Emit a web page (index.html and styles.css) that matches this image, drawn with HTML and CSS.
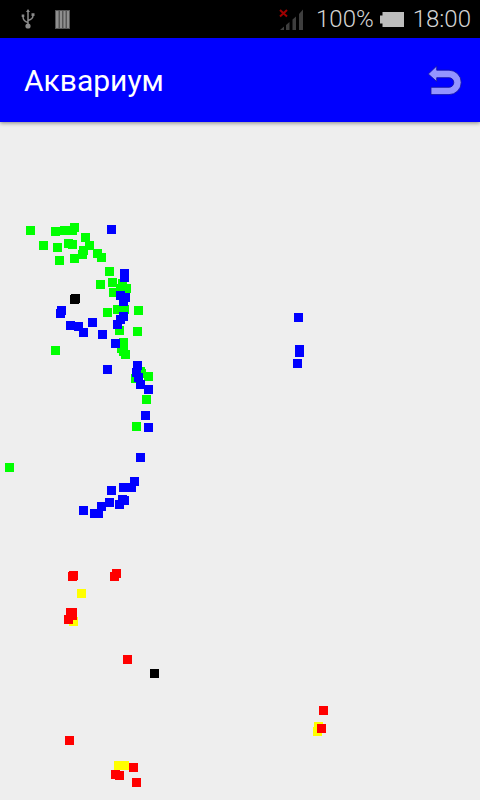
FILE: index.html
```html
<!DOCTYPE html>
<html lang="ru">
<head>
<meta charset="utf-8">
<title>Аквариум</title>
<link rel="stylesheet" href="styles.css">
</head>
<body>
<div class="statusbar">
  <div class="status-left">
    <svg class="icon-usb" width="14" height="20" viewBox="0 0 14 20">
      <path class="usb-line" d="M7 2V16M7 13.5C3 12.5 2 10.5 2 7.5M7 11.5C11 10.5 12 9 12 6.5"/>
      <path class="usb-fill" d="M7 0L9 3H5ZM0.7 5.5H3.3V8H0.7ZM10.5 4.2H13.5V7H10.5Z"/>
      <circle class="usb-fill" cx="7" cy="17" r="2.6"/>
    </svg>
    <svg class="icon-sim" width="15" height="19" viewBox="0 0 15 19">
      <rect class="sim-back" width="15" height="19"/>
      <path class="sim-bars" d="M1 1H3.5V18H1ZM5 1H7V18H5ZM8.5 1H10.500V18H8.500ZM12 1H14V18H12Z"/>
    </svg>
  </div>
  <div class="status-right">
    <svg class="icon-signal" width="25" height="24" viewBox="0 0 25 24">
      <path class="signal-bar" d="M1 22L5 18.500V22ZM7 22V17L10.500 14V22ZM13.500 22V11.500L17 8.500V22ZM20 22V6L24 1.500V22Z"/>
      <path class="signal-x" d="M1 2L8 8.500M8 2L1 8.500"/>
    </svg>
    <span class="status-text pct">100%</span>
    <svg class="icon-battery" width="24" height="15" viewBox="0 0 24 15">
      <path class="battery-fill" d="M2.500 0H24V15H2.500V11.500H0V3.500H2.500Z"/>
    </svg>
    <span class="status-text clock">18:00</span>
  </div>
</div>
<header class="appbar">
  <h1 class="title">Аквариум</h1>
  <svg class="icon-back" width="36" height="34" viewBox="0 0 36 34">
    <path class="back-shape" d="M1.300 11L9.700 3V7.200H22A12.200 12.200 0 0 1 22 31.600H4V24.300H22A4.800 4.800 0 0 0 22 14.700H9.700V18.500Z"/>
  </svg>
</header>
<main class="tank">
  <svg class="fish" width="480" height="678" viewBox="0 122 480 678">
    <g class="green">
      <rect x="26" y="226"/><rect x="51" y="227"/><rect x="60" y="226"/><rect x="64" y="226"/><rect x="68" y="226"/><rect x="70" y="223"/>
      <rect x="39" y="241"/><rect x="53" y="243"/><rect x="64" y="239"/><rect x="68" y="240"/><rect x="81" y="233"/><rect x="85" y="241"/>
      <rect x="79" y="246"/><rect x="78" y="250"/><rect x="70" y="254"/><rect x="55" y="256"/><rect x="93" y="249"/><rect x="97" y="253"/>
      <rect x="105" y="267"/><rect x="96" y="280"/><rect x="108" y="278"/><rect x="109" y="288"/><rect x="118" y="279"/><rect x="122" y="284"/>
      <rect x="116" y="284"/><rect x="103" y="308"/><rect x="113" y="305"/><rect x="120" y="305"/><rect x="134" y="306"/><rect x="115" y="326"/>
      <rect x="133" y="327"/><rect x="51" y="346"/><rect x="119" y="338"/><rect x="119" y="344"/><rect x="117" y="344"/><rect x="119" y="347"/>
      <rect x="121" y="350"/><rect x="131" y="374"/><rect x="136" y="367"/><rect x="137" y="369"/><rect x="144" y="372"/><rect x="142" y="395"/>
      <rect x="132" y="422"/><rect x="5" y="463"/>
    </g>
    <g class="blue">
      <rect x="107" y="225"/><rect x="120" y="269"/><rect x="120" y="273"/><rect x="116" y="291"/><rect x="121" y="293"/><rect x="119" y="297"/>
      <rect x="57" y="306"/><rect x="56" y="309"/><rect x="66" y="321"/><rect x="74" y="322"/><rect x="79" y="328"/><rect x="88" y="318"/>
      <rect x="98" y="330"/><rect x="113" y="320"/><rect x="116" y="315"/><rect x="119" y="312"/><rect x="111" y="339"/><rect x="103" y="365"/>
      <rect x="133" y="361"/><rect x="132" y="368"/><rect x="134" y="373"/><rect x="136" y="380"/><rect x="144" y="385"/><rect x="141" y="411"/>
      <rect x="144" y="423"/><rect x="136" y="453"/><rect x="130" y="477"/><rect x="127" y="483"/><rect x="119" y="483"/><rect x="107" y="486"/>
      <rect x="118" y="495"/><rect x="120" y="496"/><rect x="115" y="500"/><rect x="105" y="498"/><rect x="97" y="502"/><rect x="94" y="509"/>
      <rect x="90" y="509"/><rect x="79" y="506"/><rect x="294" y="313"/><rect x="295" y="345"/><rect x="295" y="348"/><rect x="293" y="359"/>
    </g>
    <g class="yellow">
      <rect x="77" y="589"/><rect x="69" y="617"/><rect x="114" y="761"/><rect x="120" y="761"/><rect x="314" y="722"/><rect x="313" y="727"/>
    </g>
    <g class="red">
      <rect x="69" y="571"/><rect x="68" y="572"/><rect x="112" y="569"/><rect x="110" y="572"/><rect x="66" y="608"/><rect x="68" y="608"/>
      <rect x="68" y="611"/><rect x="64" y="615"/><rect x="123" y="655"/><rect x="65" y="736"/><rect x="129" y="763"/><rect x="111" y="770"/><rect x="115" y="771"/>
      <rect x="132" y="778"/><rect x="319" y="706"/><rect x="317" y="724"/>
    </g>
    <g class="black">
      <rect x="71" y="294"/><rect x="70" y="295"/><rect x="150" y="669"/>
    </g>
  </svg>
</main>
</body>
</html>
```
FILE: styles.css
```css
html, body {
  margin: 0;
  padding: 0;
}
body {
  width: 480px;
  height: 800px;
  overflow: hidden;
  background: #eeeeee;
  font-family: Roboto, "Noto Sans", sans-serif;
  display: flex;
  flex-direction: column;
}
svg {
  display: block;
  flex: none;
}
.statusbar {
  height: 38px;
  background: #000;
  display: flex;
  justify-content: space-between;
  align-items: center;
}
.status-left {
  display: flex;
  align-items: center;
  gap: 20px;
  padding-left: 21px;
}
.status-right {
  display: flex;
  align-items: center;
  padding-right: 9px;
}
.status-text {
  color: #d4d4d4;
  font-size: 24px;
  font-weight: 300;
  line-height: 38px;
}
.pct {
  margin-left: 12px;
}
.clock {
  margin-left: 9px;
}
.icon-battery {
  margin-left: 6px;
  margin-top: 1px;
}
.icon-signal {
  margin-top: 2px;
}
.usb-line {
  fill: none;
  stroke: #8a8a8a;
  stroke-width: 1.500;
}
.usb-fill {
  fill: #8a8a8a;
}
.sim-back {
  fill: #555;
}
.sim-bars {
  fill: #8f8f8f;
}
.signal-bar {
  fill: #3e3e3e;
}
.signal-x {
  fill: none;
  stroke: #a00000;
  stroke-width: 2;
}
.battery-fill {
  fill: #bdbdbd;
}
.appbar {
  height: 84px;
  background: #0000ff;
  display: flex;
  align-items: center;
  justify-content: space-between;
  padding: 0 17px 0 24px;
  box-shadow: 0 1px 4px rgba(0, 0, 0, 0.45);
  position: relative;
}
.title {
  margin: 0;
  color: #fff;
  font-size: 30px;
  font-weight: 400;
}
.back-shape {
  fill: #9494ff;
  stroke: #1010a0;
  stroke-width: 0.8;
}
.tank {
  flex: 1;
}
.fish rect {
  width: 9px;
  height: 9px;
}
.green { fill: #00ff00; }
.blue { fill: #0000ff; }
.yellow { fill: #ffff00; }
.red { fill: #ff0000; }
.black { fill: #000; }
```
